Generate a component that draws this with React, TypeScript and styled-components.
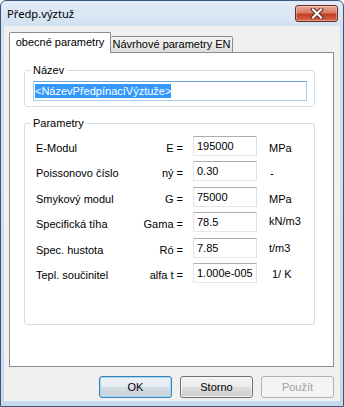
import React from "react";
import styled, { createGlobalStyle } from "styled-components";

const Global = createGlobalStyle`
  html, body { margin: 0; padding: 0; background: #ffffff; }
  * { box-sizing: border-box; }
`;

const Window = styled.div`
  width: 344px;
  height: 407px;
  border: 1px solid #3a5779;
  border-radius: 6px 6px 0 0;
  background: linear-gradient(180deg, #e3ecf7 0px, #d3e1f1 25px, #c8d9ec 100%);
  display: flex;
  flex-direction: column;
  font-family: "Liberation Sans", Arial, sans-serif;
  font-size: 11px;
  color: #000;
  overflow: hidden;
`;

const TitleBar = styled.div`
  height: 25px;
  display: flex;
  align-items: flex-start;
  justify-content: space-between;
  padding: 0 5px 0 6px;
`;

const Title = styled.span`
  font-family: "Noto Sans", "Open Sans", sans-serif;
  font-size: 11.2px;
  line-height: 16px;
  margin-top: 5px;
  color: #000;
`;

const CloseButton = styled.div`
  width: 43px;
  height: 17px;
  margin-top: 4px;
  border: 1px solid #6b2a20;
  border-radius: 3px;
  background: linear-gradient(180deg, #eaa898 0%, #d97a63 45%, #c33d25 55%, #d6664c 100%);
  box-shadow: inset 0 0 0 1px rgba(255, 255, 255, 0.35);
  display: flex;
  align-items: center;
  justify-content: center;
`;

const Client = styled.div`
  flex: 1;
  margin: 0 3px 5px 3px;
  background: #f0f0f0;
  padding: 6px 6px 3px 5px;
  display: flex;
  flex-direction: column;
`;

const TabStrip = styled.div`
  display: flex;
  align-items: flex-end;
  height: 21px;
  margin-bottom: -1px;
  position: relative;
  z-index: 1;
`;

const Tab = styled.div<{ $active?: boolean; $width: number }>`
  width: ${(p) => p.$width}px;
  height: ${(p) => (p.$active ? 21 : 17)}px;
  border: 1px solid #898c95;
  border-bottom: ${(p) => (p.$active ? "none" : "1px solid #898c95")};
  border-left: ${(p) => (p.$active ? "1px solid #898c95" : "none")};
  border-radius: 2px 2px 0 0;
  background: ${(p) => (p.$active ? "#ffffff" : "linear-gradient(180deg, #f3f3f3 0%, #ebebeb 50%, #dedede 100%)")};
  padding-top: ${(p) => (p.$active ? 3 : 1)}px;
  text-align: center;
  line-height: 13px;
  white-space: nowrap;
`;

const Panel = styled.div`
  flex: 1;
  border: 1px solid #898c95;
  background: #ffffff;
  padding: 11px 18px 0 14px;
  display: flex;
  flex-direction: column;
  gap: 10px;
`;

const Group = styled.fieldset<{ $bottom: number }>`
  margin: 0;
  min-width: 0;
  padding: 0 7px ${(p) => p.$bottom}px 8px;
  border: 1px solid #d5dfe5;
  border-radius: 3px;
`;

const Legend = styled.legend`
  padding: 0 2px;
  margin-left: -2px;
  line-height: 13px;
  font-size: 11px;
`;

const NameField = styled.div`
  margin-top: 4px;
  height: 20px;
  border: 1px solid #a9cde6;
  border-top-color: #6fa6d6;
  background: #fff;
  padding: 1px 0 0 1px;
  display: flex;
  align-items: flex-start;
`;

const Selected = styled.span`
  background: #3399ff;
  color: #ffffff;
  line-height: 14px;
  margin-top: 1px;
  white-space: nowrap;
`;

const Rows = styled.div`
  padding: 6px 0 0 3px;
  display: flex;
  flex-direction: column;
  gap: 5.4px;
`;

const Row = styled.div`
  display: grid;
  grid-template-columns: 90px 67px 64px 1fr;
  height: 20px;
  align-items: start;
`;

const Label = styled.span`
  margin-top: 6px;
  line-height: 13px;
  white-space: nowrap;
`;

const Symbol = styled(Label)`
  text-align: right;
  padding-right: 10px;
`;

const Unit = styled.span<{ $top: number; $left: number }>`
  margin-top: ${(p) => p.$top}px;
  padding-left: ${(p) => p.$left}px;
  line-height: 13px;
  white-space: nowrap;
`;

const ValueBox = styled.div`
  height: 20px;
  border: 1px solid #e2e3ea;
  border-top-color: #abadb3;
  border-right-color: #dbdfe6;
  border-bottom-color: #e3e9ef;
  background: #fff;
  padding: 2px 0 0 3px;
  line-height: 14px;
  white-space: nowrap;
`;

const ButtonRow = styled.div`
  margin-top: 9px;
  display: flex;
  justify-content: flex-end;
  gap: 8px;
`;

const Button = styled.button<{ $kind: "default" | "normal" | "disabled" }>`
  width: 73px;
  height: 22px;
  padding: 0;
  border-radius: 3px;
  font-family: "Liberation Sans", Arial, sans-serif;
  font-size: 11px;
  line-height: 13px;
  border: 1px solid
    ${(p) => (p.$kind === "default" ? "#3c7fb1" : p.$kind === "normal" ? "#707070" : "#adb2b5")};
  color: ${(p) => (p.$kind === "disabled" ? "#a0a0a0" : "#000")};
  background: ${(p) =>
    p.$kind === "disabled"
      ? "#f4f4f4"
      : p.$kind === "default"
      ? "linear-gradient(180deg, #eef3f6 0%, #e4ebf0 50%, #d3dce3 50%, #c8d2da 100%)"
      : "linear-gradient(180deg, #f2f2f2 0%, #ebebeb 50%, #dddddd 50%, #cfcfcf 100%)"};
  box-shadow: ${(p) =>
    p.$kind === "default"
      ? "inset 0 0 0 1px #9fdcf7"
      : p.$kind === "normal"
      ? "inset 0 0 0 1px rgba(255,255,255,0.7)"
      : "none"};
`;

type Param = { label: string; sym: string; value: string; unit: string; top: number; left: number };

const params: Param[] = [
  { label: "E-Modul", sym: "E =", value: "195000", unit: "MPa", top: 6, left: 12 },
  { label: "Poissonovo číslo", sym: "ný =", value: "0.30", unit: "-", top: 6, left: 13 },
  { label: "Smykový modul", sym: "G =", value: "75000", unit: "MPa", top: 6, left: 12 },
  { label: "Specifická tíha", sym: "Gama =", value: "78.5", unit: "kN/m3", top: 3, left: 12 },
  { label: "Spec. hustota", sym: "Ró =", value: "7.85", unit: "t/m3", top: 4, left: 12 },
  { label: "Tepl. součinitel", sym: "alfa t =", value: "1.000e-005", unit: "1/ K", top: 5, left: 15 },
];

export default function App() {
  return (
    <>
      <Global />
      <Window>
        <TitleBar>
          <Title>Předp.výztuž</Title>
          <CloseButton>
            <svg width="14" height="11" viewBox="0 0 14 11">
              <path d="M3 1.5 L11 9.5 M11 1.5 L3 9.5" stroke="#5a1d14" strokeWidth="4" strokeLinecap="square" />
              <path d="M3 1.5 L11 9.5 M11 1.5 L3 9.5" stroke="#ffffff" strokeWidth="2.2" strokeLinecap="square" />
            </svg>
          </CloseButton>
        </TitleBar>
        <Client>
          <TabStrip>
            <Tab $active $width={102}>obecné parametry</Tab>
            <Tab $width={122}>Návrhové parametry EN</Tab>
          </TabStrip>
          <Panel>
            <Group $bottom={5}>
              <Legend>Název</Legend>
              <NameField>
                <Selected>&lt;NázevPředpínacíVýztuže&gt;</Selected>
              </NameField>
            </Group>
            <Group $bottom={41}>
              <Legend>Parametry</Legend>
              <Rows>
                {params.map((p) => (
                  <Row key={p.label}>
                    <Label>{p.label}</Label>
                    <Symbol>{p.sym}</Symbol>
                    <ValueBox>{p.value}</ValueBox>
                    <Unit $top={p.top} $left={p.left}>{p.unit}</Unit>
                  </Row>
                ))}
              </Rows>
            </Group>
          </Panel>
          <ButtonRow>
            <Button $kind="default">OK</Button>
            <Button $kind="normal">Storno</Button>
            <Button $kind="disabled">Použít</Button>
          </ButtonRow>
        </Client>
      </Window>
    </>
  );
}
